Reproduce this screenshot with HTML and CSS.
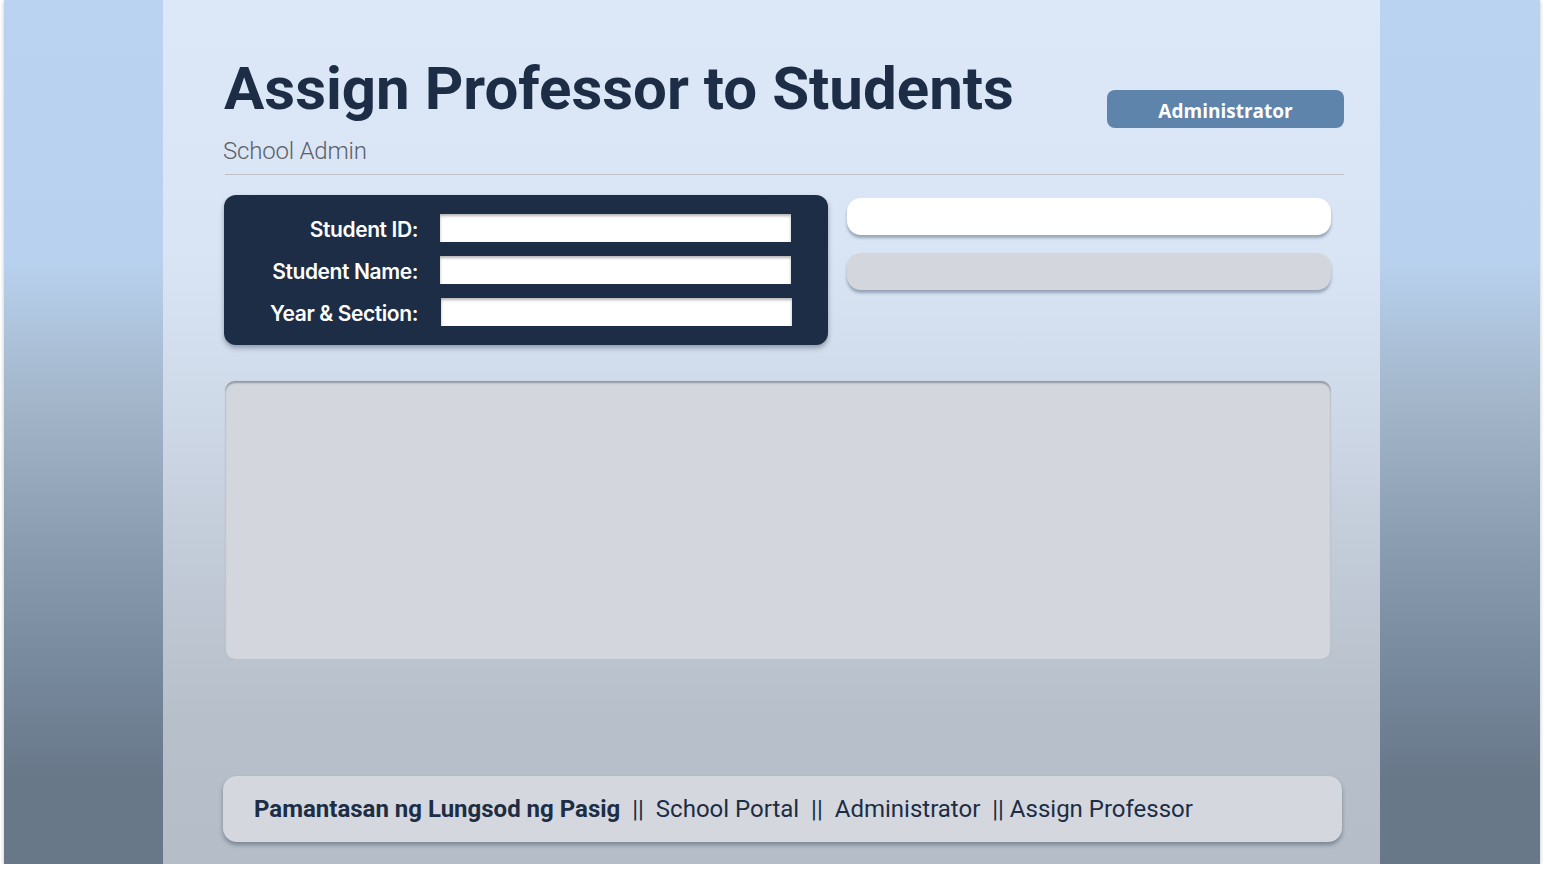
FILE: index.html
```html
<!DOCTYPE html>
<html lang="en">
<head>
<meta charset="utf-8">
<title>Assign Professor to Students</title>
<link rel="stylesheet" href="styles.css">
</head>
<body>
<div class="frame">
  <div class="side"></div>
  <main class="main">
    <header class="header">
      <div class="titles">
        <h1 class="title">Assign Professor to Students</h1>
        <p class="subtitle">School Admin</p>
      </div>
      <button class="role-btn">Administrator</button>
    </header>
    <hr class="divider">
    <section class="top-row">
      <div class="student-card">
        <label class="field-label" for="sid">Student ID:</label>
        <input class="field-input" id="sid" type="text">
        <label class="field-label" for="sname">Student Name:</label>
        <input class="field-input" id="sname" type="text">
        <label class="field-label" for="ysec">Year &amp; Section:</label>
        <input class="field-input shifted" id="ysec" type="text">
      </div>
      <div class="pills">
        <div class="pill pill-white"></div>
        <div class="pill pill-gray"></div>
      </div>
    </section>
    <section class="list-box"></section>
    <footer class="footer"><strong class="brand">Pamantasan ng Lungsod ng Pasig</strong><span class="crumbs">  ||  School Portal  ||  Administrator  || Assign Professor</span></footer>
  </main>
  <div class="side"></div>
</div>
</body>
</html>
```
FILE: styles.css
```css
html, body {
  margin: 0;
  padding: 0;
  background: #ffffff;
}

body {
  font-family: Roboto, "Liberation Sans", sans-serif;
}

.frame {
  width: 1536px;
  height: 864px;
  margin-left: 4px;
  display: grid;
  grid-template-columns: 159px 1217px 160px;
  background: linear-gradient(to bottom, #b9d3f0 0px, #b8d1ee 260px, #a3b6ca 400px, #8b9db1 540px, #75879b 680px, #687889 780px, #687889 864px);
  box-shadow: 0 1px 4px rgba(0, 0, 0, 0.25);
}

.main {
  display: flex;
  flex-direction: column;
  padding: 53px 36px 22px 61px;
  background: linear-gradient(to bottom, #dce7f7 0px, #d9e5f5 250px, #cfdae9 400px, #c0c9d5 580px, #b7bfca 720px, #b5bdc8 864px);
}

.header {
  display: flex;
  justify-content: space-between;
  align-items: flex-start;
}

.title {
  margin: 0;
  font-family: Roboto, sans-serif;
  font-weight: 700;
  font-size: 60px;
  line-height: 72px;
  color: #1c2d45;
}

.subtitle {
  margin: 12px 0 0 -1px;
  font-family: Roboto, sans-serif;
  font-weight: 300;
  font-size: 24px;
  line-height: 28px;
  letter-spacing: -0.2px;
  color: #5a6068;
}

.role-btn {
  margin-top: 37px;
  width: 237px;
  height: 38px;
  border: none;
  border-radius: 8px;
  background: #5f84ab;
  color: #ffffff;
  font-family: "Open Sans", sans-serif;
  font-weight: 700;
  font-size: 19px;
  padding: 3px 0 0 0;
}

.divider {
  margin: 9px 0 0 1px;
  border: none;
  height: 1px;
  background: #bfbfc6;
}

.top-row {
  display: flex;
  align-items: flex-start;
  gap: 19px;
  margin-top: 20px;
}

.student-card {
  width: 604px;
  box-sizing: border-box;
  padding: 19px 0 19px 0;
  display: grid;
  grid-template-columns: 194px 351px;
  column-gap: 22px;
  row-gap: 14px;
  align-items: center;
  background: #1c2d45;
  border-radius: 12px;
  box-shadow: 0 3px 5px rgba(20, 30, 50, 0.35);
}

.field-label {
  text-align: right;
  color: #ffffff;
  font-family: Inter, "Noto Sans", sans-serif;
  font-weight: 600;
  font-size: 21px;
  letter-spacing: -0.4px;
  padding-top: 2px;
}

.field-input {
  height: 28px;
  width: 351px;
  box-sizing: border-box;
  border: none;
  margin: 0;
  background: #ffffff;
  box-shadow: inset 0 2px 3px rgba(0, 0, 0, 0.3);
}

.shifted {
  margin-left: 1px;
}

.pills {
  display: flex;
  flex-direction: column;
  gap: 18px;
  width: 484px;
  margin-top: 3px;
}

.pill {
  height: 37px;
  border-radius: 14px;
  box-shadow: 0 3px 3px rgba(70, 90, 115, 0.45);
}

.pill-white {
  background: #ffffff;
}

.pill-gray {
  background: #d3d7dd;
}

.list-box {
  margin: 36px 0 0 1px;
  width: 1106px;
  height: 278px;
  background: #d3d7dd;
  border-radius: 10px;
  box-shadow: inset 0 2px 2px rgba(60, 70, 85, 0.45), 0 0 1px rgba(150, 160, 175, 0.5);
}

.footer {
  margin-top: auto;
  margin-left: -1px;
  width: 1119px;
  height: 66px;
  box-sizing: border-box;
  padding-left: 31px;
  display: flex;
  align-items: center;
  background: #d4d8de;
  border-radius: 14px;
  box-shadow: 0 3px 4px rgba(50, 65, 85, 0.45);
  font-family: Roboto, sans-serif;
  font-size: 24px;
  color: #1c2d45;
  white-space: pre;
}

.brand {
  font-weight: 700;
}

.crumbs {
  font-weight: 400;
}
```
